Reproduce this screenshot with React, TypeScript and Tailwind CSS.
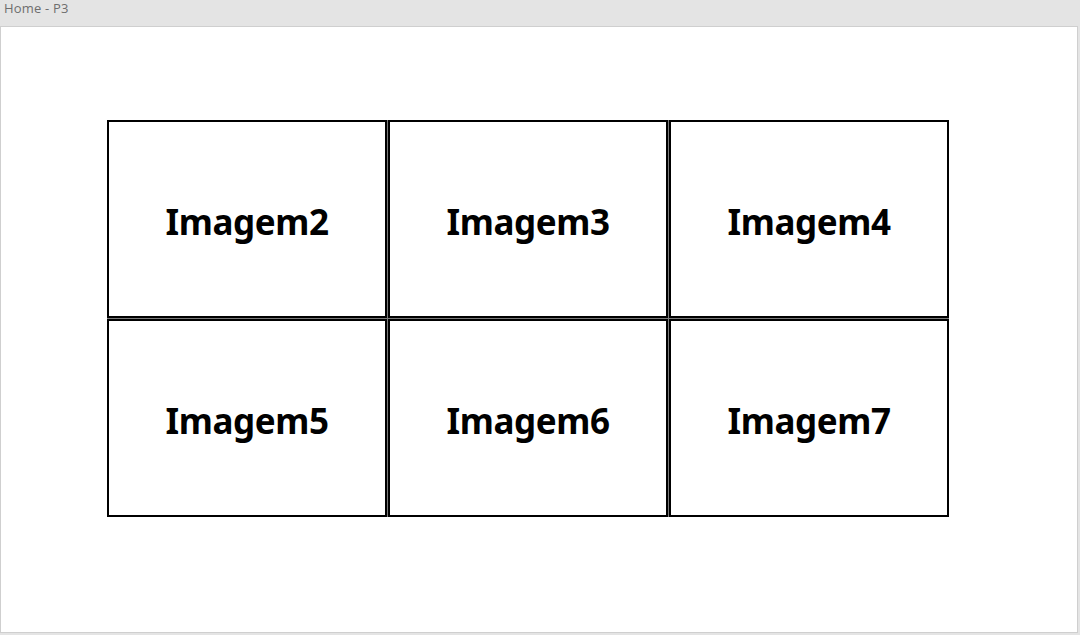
const cells = ["Imagem2", "Imagem3", "Imagem4", "Imagem5", "Imagem6", "Imagem7"];

export default function App() {
  return (
    <div className="w-[1080px] h-[635px] bg-[#e4e4e4] overflow-hidden font-['Open_Sans',sans-serif]">
      <div className="h-[26px] pl-[4px] text-[13px] leading-[17px] text-[#6e6e6e] tracking-[0.2px]">
        Home - P3
      </div>
      <div className="w-[1078px] h-[607px] bg-white border border-[#cfcfcf] pl-[106px] pt-[93px]">
        <div className="grid w-fit grid-cols-[280px_280px_280px] grid-rows-[198px_198px] gap-[1px] bg-[#7a7a7a]">
          {cells.map((c) => (
            <div
              key={c}
              className="bg-white border-2 border-black flex items-center justify-center pt-[6px]"
            >
              <span className="font-['Noto_Sans',sans-serif] font-bold text-[35px] text-black tracking-[-0.4px]">
                {c}
              </span>
            </div>
          ))}
        </div>
      </div>
    </div>
  );
}
